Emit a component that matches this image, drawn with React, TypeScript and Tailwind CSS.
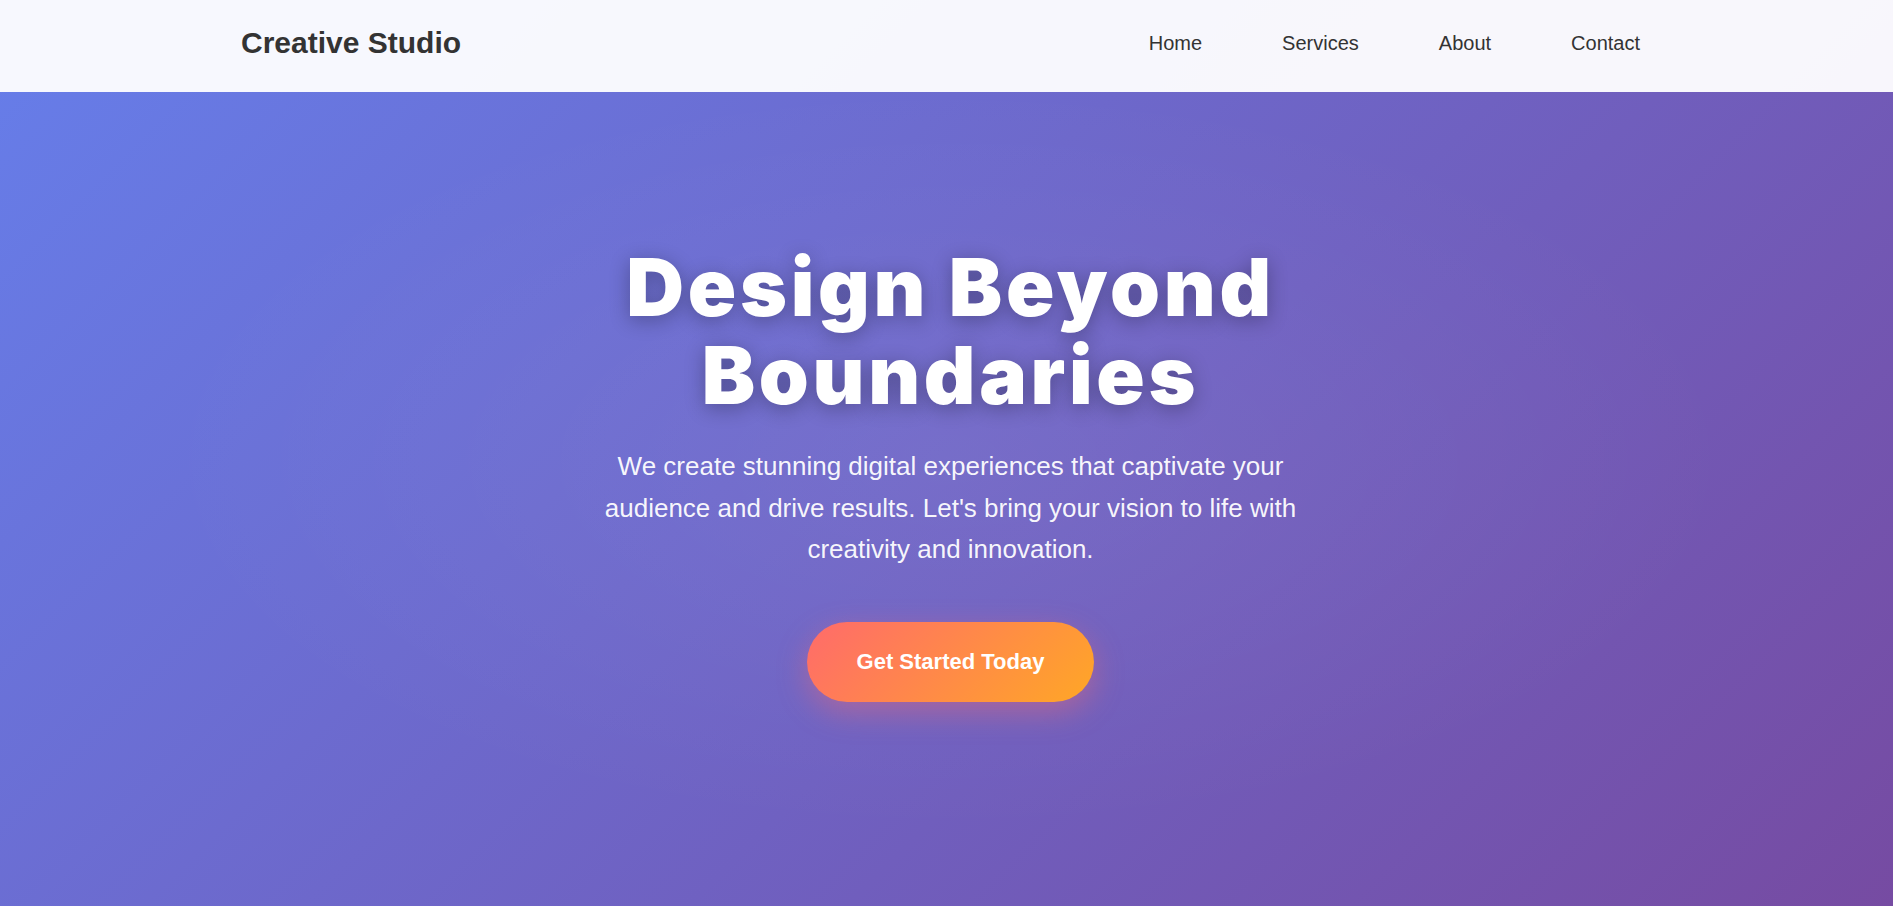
import React from 'react';

const links = ['Home', 'Services', 'About', 'Contact'];

const Navbar: React.FC = () => {
  return (
    <nav className="h-[92px] pb-[7px] bg-white/95 flex items-center justify-between pl-[241px] pr-[253px] font-['Liberation_Sans',Arial,sans-serif]">
      <div className="text-[30px] font-bold text-[#333]">Creative Studio</div>
      <ul className="flex gap-[80px]">
        {links.map((l) => (
          <li key={l}>
            <a href="#" className="text-[20px] text-[#333]">
              {l}
            </a>
          </li>
        ))}
      </ul>
    </nav>
  );
};

const App: React.FC = () => {
  return (
    <div className="min-h-screen flex flex-col bg-[linear-gradient(135deg,#667eea_0%,#764ba2_100%)]">
      <Navbar />
      <section className="flex-1 flex flex-col items-center pt-[151px] pl-[8px] text-white text-center bg-[radial-gradient(ellipse_at_50%_45%,rgba(255,255,255,0.06),transparent_60%)]">
        <h1 className="w-[900px] text-[80px] leading-[88px] font-black tracking-[3.7px] font-['Inter',sans-serif] [text-shadow:0_4px_20px_rgba(0,0,0,0.3)]">
          Design Beyond Boundaries
        </h1>
        <p className="mt-[27px] w-[720px] text-[26px] leading-[41.6px] text-white/95 font-['Liberation_Sans',Arial,sans-serif]">
          We create stunning digital experiences that captivate your audience and drive results. Let's bring your
          vision to life with creativity and innovation.
        </p>
        <button className="mt-[51px] w-[287px] h-[80px] rounded-full bg-[linear-gradient(135deg,#ff6b6b,#ffa726)] text-white text-[22px] font-bold font-['Liberation_Sans',Arial,sans-serif] shadow-[0_10px_30px_rgba(255,107,107,0.4)]">
          Get Started Today
        </button>
      </section>
    </div>
  );
};

export default App;
